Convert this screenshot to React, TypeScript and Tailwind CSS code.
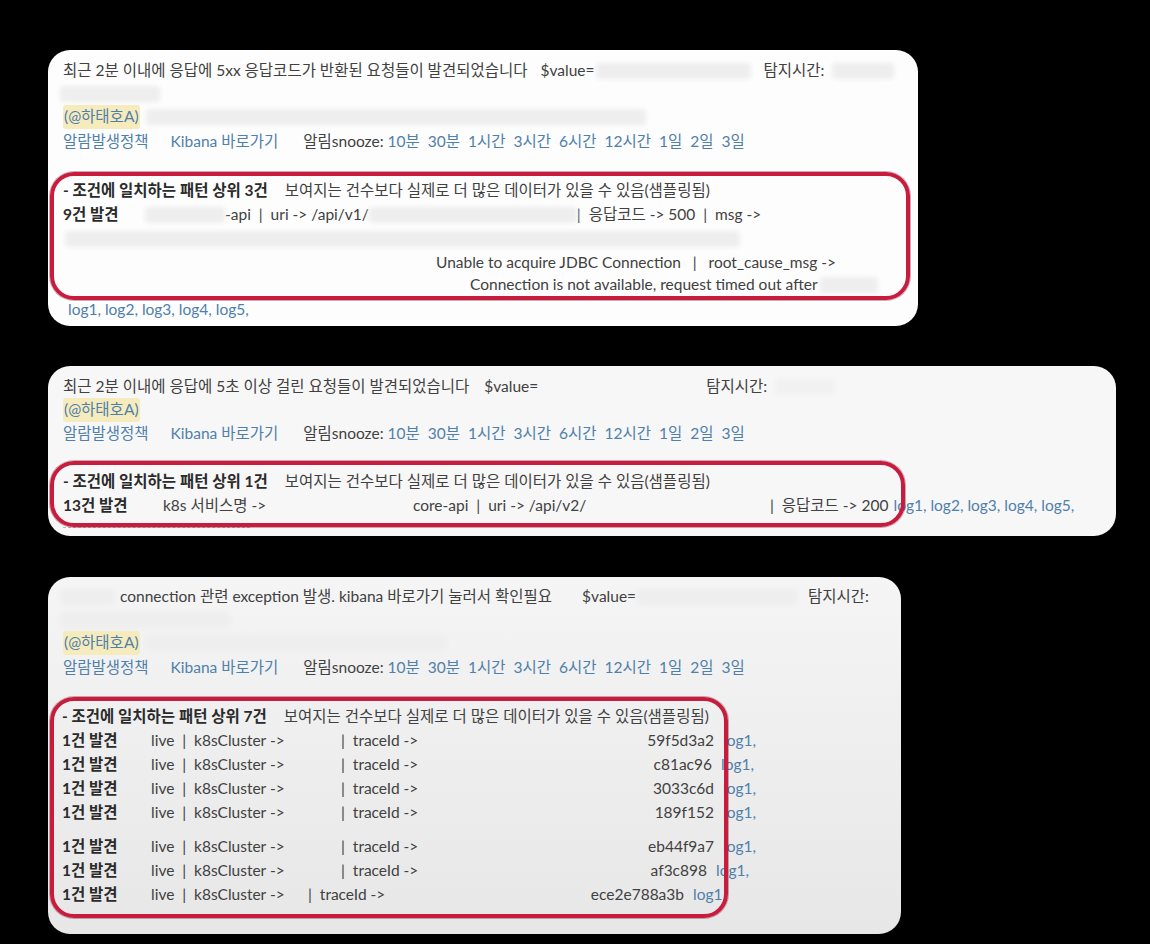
import clsx from "clsx";
import type { ReactNode } from "react";

const link = "text-[#4f80ab]";
const row = "flex items-center whitespace-pre *:shrink-0";

function Blur({ className }: { className?: string }) {
  return <span className={clsx("inline-block h-[16px] rounded-[4px] bg-[#eeeeee] blur-[2px]", className)} />;
}

function Mention() {
  return <span className={clsx("rounded-[3px] bg-[#f6ebbd] px-[1px]", link)}>(@하태호A)</span>;
}

function Links() {
  const times = ["10분", "30분", "1시간", "3시간", "6시간", "12시간", "1일", "2일", "3일"];
  return (
    <div className={clsx(row, "h-[26px] pl-[15px]")}>
      <span className={link}>알람발생정책</span>
      <span className={clsx("ml-[22px]", link)}>Kibana 바로가기</span>
      <span className="ml-[25px]">알림snooze: </span>
      {times.map((t, i) => (
        <span key={t} className={clsx(link, i > 0 && "ml-[8px]")}>
          {t}
        </span>
      ))}
    </div>
  );
}

// red highlight box drawn over the content
function Annot({ className, children }: { className?: string; children: ReactNode }) {
  return (
    <div className={clsx("relative", className)}>
      {children}
      <div className="pointer-events-none absolute inset-0 rounded-[24px] border-[4px] border-[#c71c3e] shadow-[0_0_0_1px_rgba(120,20,40,0.35)]" />
    </div>
  );
}

function Header({ n }: { n: number }) {
  return (
    <div className={clsx(row, "h-[24px]")}>
      <span className="font-bold text-[#2b2b2b]">- 조건에 일치하는 패턴 상위 {n}건</span>
      <span className="ml-[17px]">보여지는 건수보다 실제로 더 많은 데이터가 있을 수 있음(샘플링됨)</span>
    </div>
  );
}

const traceRows = [
  { hash: "59f5d3a2", w: "w-[373px]", gap: false },
  { hash: "c81ac96", w: "w-[371px]", gap: false },
  { hash: "3033c6d", w: "w-[373px]", gap: false },
  { hash: "189f152", w: "w-[373px]", gap: false },
  { hash: "eb44f9a7", w: "w-[373px]", gap: true },
  { hash: "af3c898", w: "w-[366px]", gap: false },
];

export default function App() {
  return (
    <div className="min-h-[944px] w-[1150px] overflow-hidden bg-black pb-[10px] text-[15.5px] text-[#414141] font-[family-name:Lato,'Noto_Sans_CJK_KR',sans-serif]">
      {/* Alert 1 */}
      <div className="ml-[48px] mt-[50px] h-[276px] w-[870px] rounded-[22px] bg-[#fdfdfd] pt-[9px]">
        <div className={clsx(row, "h-[24px] pl-[15px]")}>
          <span>최근 2분 이내에 응답에 5xx 응답코드가 반환된 요청들이 발견되었습니다</span>
          <span className="ml-[13px] flex w-[223px] items-center">
            $value=
            <Blur className="ml-[2px] w-[155px]" />
          </span>
          <span>탐지시간:</span>
          <Blur className="ml-[8px] w-[62px]" />
        </div>
        <div className="flex h-[22px] items-center pl-[12px]">
          <Blur className="h-[14px] w-[100px]" />
        </div>
        <div className={clsx(row, "h-[24px] pl-[15px]")}>
          <Mention />
          <Blur className="ml-[6px] w-[500px]" />
        </div>
        <Links />
        <Annot className="ml-[2px] mt-[17px] h-[128px] w-[860px] pl-[13px] pt-[7px]">
          <Header n={3} />
          <div className={clsx(row, "h-[24px]")}>
            <span className="w-[82px] font-bold text-[#2b2b2b]">9건 발견</span>
            <Blur className="w-[80px]" />
            <span>-api  |  uri -&gt; /api/v1/</span>
            <Blur className="w-[208px]" />
            <span>|  응답코드 -&gt; 500  |  msg -&gt;</span>
          </div>
          <div className="flex h-[24px] items-center">
            <Blur className="ml-[2px] w-[675px]" />
          </div>
          <div className={clsx(row, "h-[23px] pl-[373px]")}>
            <span>Unable to acquire JDBC Connection   |   root_cause_msg -&gt;</span>
          </div>
          <div className={clsx(row, "h-[22px] pl-[407px]")}>
            <span>Connection is not available, request timed out after</span>
            <Blur className="ml-[2px] w-[58px]" />
          </div>
        </Annot>
        <div className={clsx("flex h-[20px] items-center pl-[20px]", link)}>log1, log2, log3, log4, log5,</div>
      </div>

      {/* Alert 2 */}
      <div className="ml-[48px] mt-[40px] h-[170px] w-[1068px] rounded-[22px] bg-[#f7f7f7] pt-[9px]">
        <div className={clsx(row, "h-[24px] pl-[15px]")}>
          <span>최근 2분 이내에 응답에 5초 이상 걸린 요청들이 발견되었습니다</span>
          <span className="ml-[15px] w-[222px]">$value=</span>
          <span>탐지시간:</span>
          <Blur className="ml-[8px] w-[60px] bg-[#f1f1f1]" />
        </div>
        <div className="flex h-[22px] items-center pl-[15px]">
          <Mention />
        </div>
        <Links />
        <Annot className="ml-[2px] mt-[14px] h-[66px] w-[855px] pl-[13px] pt-[9px]">
          <Header n={1} />
          <div className={clsx(row, "h-[24px]")}>
            <span className="w-[100px] font-bold text-[#2b2b2b]">13건 발견</span>
            <span className="w-[250px]">k8s 서비스명 -&gt;</span>
            <span className="w-[357px]">core-api  |  uri -&gt; /api/v2/</span>
            <span>|  응답코드 -&gt; 200</span>
            <span className={clsx("ml-[5px]", link)}>log1, log2, log3, log4, log5,</span>
          </div>
        </Annot>
        <div className="ml-[15px] w-[187px] border-t border-dashed border-[#b9b9b9]" />
      </div>

      {/* Alert 3 */}
      <div className="ml-[48px] mt-[41px] h-[357px] w-[853px] rounded-[22px] bg-gradient-to-b from-[#f5f5f5] to-[#e7e7e7] pt-[8px]">
        <div className={clsx(row, "h-[24px] pl-[12px]")}>
          <Blur className="w-[55px]" />
          <span className="ml-[5px]">connection 관련 exception 발생. kibana 바로가기 눌러서 확인필요</span>
          <span className="ml-[30px] flex w-[226px] items-center">
            $value=
            <Blur className="ml-[1px] w-[160px]" />
          </span>
          <span>탐지시간:</span>
        </div>
        <div className="flex h-[22px] items-center pl-[12px]">
          <Blur className="h-[14px] w-[170px]" />
        </div>
        <div className={clsx(row, "h-[24px] pl-[15px]")}>
          <Mention />
          <Blur className="ml-[6px] w-[300px]" />
        </div>
        <Links />
        <Annot className="ml-[2px] mt-[16px] h-[221px] w-[678px] pl-[12px] pt-[8px]">
          <Header n={7} />
          {traceRows.map((r) => (
            <div key={r.hash} className={clsx(row, "h-[24px]", r.gap && "mt-[10px]")}>
              <span className="w-[89px] font-bold text-[#2b2b2b]">1건 발견</span>
              <span className="w-[190px]">live  |  k8sCluster -&gt;</span>
              <span className={clsx("flex items-center justify-between", r.w)}>
                <span>|  traceId -&gt;</span>
                <span>{r.hash}</span>
              </span>
              <span className={clsx("ml-[9px]", link)}>log1,</span>
            </div>
          ))}
          <div className={clsx(row, "h-[24px]")}>
            <span className="w-[89px] font-bold text-[#2b2b2b]">1건 발견</span>
            <span className="w-[157px]">live  |  k8sCluster -&gt;</span>
            <span className="flex w-[376px] items-center justify-between">
              <span>|  traceId -&gt;</span>
              <span>ece2e788a3b</span>
            </span>
            <span className={clsx("ml-[9px]", link)}>log1</span>
          </div>
        </Annot>
      </div>
    </div>
  );
}
